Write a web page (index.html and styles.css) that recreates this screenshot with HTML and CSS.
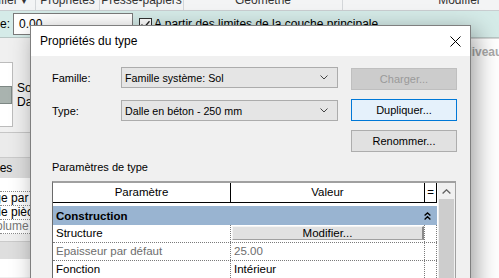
FILE: index.html
```html
<!DOCTYPE html>
<html lang="fr">
  <head>
    <meta charset="UTF-8" />
    <title>Propriétés du type</title>
    <link rel="stylesheet" href="styles.css">
  </head>
  <body>
    <div class="ribbon">
      <div class="ribbon-panel panel-select"><span>Modifier ▾</span></div>
      <div class="ribbon-panel panel-props"><span>Propriétés</span></div>
      <div class="ribbon-panel panel-clip"><span>Presse-papiers</span></div>
      <div class="ribbon-panel panel-geom"><span>Géométrie</span></div>
      <div class="ribbon-panel panel-modify"><span>Modifier</span></div>
    </div>

    <div class="options">
      <span class="opt-label">Décalage:</span>
      <div class="opt-input">0.00</div>
      <span class="opt-check">
        <svg width="11" height="11" viewBox="0 0 11 11"><path d="M1.5 5.5 L4.3 8.3 L9.5 2.3" fill="none" stroke="#222" stroke-width="1.3"/></svg>
      </span>
      <span class="opt-text">A partir des limites de la couche principale</span>
    </div>

    <div class="workspace">
      <div class="palette">
        <div class="type-selector">
          <div class="type-preview"><div class="type-swatch"></div></div>
          <div class="type-names">
            <div>Sol</div>
            <div>Dalle en béton - 250 mm</div>
          </div>
        </div>
        <div class="palette-filter"></div>
        <div class="palette-section"><span class="cut cut-contr">Contraintes</span></div>
        <div class="palette-row"></div>
        <div class="palette-row"><span class="cut cut-dec">Décalage par rapport au niveau</span></div>
        <div class="palette-row"><span class="cut cut-lim">Limite de pièce</span></div>
        <div class="palette-row muted"><span class="cut cut-vol">Lié au volume</span></div>
        <div class="palette-section dark"></div>
        <div class="palette-row link"><span class="cut cut-link">Modifier le type</span></div>
      </div>
      <div class="view">
        <div class="view-tab">Niveau 0</div>
      </div>
    </div>

    <div class="dialog">
      <div class="dialog-title">
        <span>Propriétés du type</span>
        <svg class="close" width="11" height="11" viewBox="0 0 11 11"><path d="M0.5 0.5 L10.5 10.5 M10.5 0.5 L0.5 10.5" stroke="#000" stroke-width="1"/></svg>
      </div>
      <div class="dialog-body">
        <div class="type-head">
          <div class="type-fields">
            <span class="field-label">Famille:</span>
            <div class="combo">
              <span>Famille système: Sol</span>
              <svg width="8" height="5" viewBox="0 0 8 5"><path d="M0.5 0.5 L4 4 L7.5 0.5" fill="none" stroke="#444" stroke-width="1"/></svg>
            </div>
            <span class="field-label">Type:</span>
            <div class="combo">
              <span>Dalle en béton - 250 mm</span>
              <svg width="8" height="5" viewBox="0 0 8 5"><path d="M0.5 0.5 L4 4 L7.5 0.5" fill="none" stroke="#444" stroke-width="1"/></svg>
            </div>
          </div>
          <div class="type-actions">
            <div class="btn btn-disabled">Charger...</div>
            <div class="btn btn-focus">Dupliquer...</div>
            <div class="btn">Renommer...</div>
          </div>
        </div>

        <div class="section-label">Paramètres de type</div>

        <div class="grid-frame">
          <div class="grid">
            <div class="grid-head">
              <div class="cell c-name">Paramètre</div>
              <div class="cell c-value">Valeur</div>
              <div class="cell c-eq">=</div>
            </div>
            <div class="grid-gap"></div>
            <div class="grid-group">
              <span>Construction</span>
              <svg width="7" height="8" viewBox="0 0 7 8"><path d="M0.6 3.6 L3.5 0.9 L6.4 3.6 M0.6 7.4 L3.5 4.7 L6.4 7.4" fill="none" stroke="#000" stroke-width="1.3"/></svg>
            </div>
            <div class="grid-row">
              <div class="cell c-name">Structure</div>
              <div class="cell c-value"><div class="cell-btn">Modifier...</div></div>
              <div class="cell c-eq"></div>
            </div>
            <div class="grid-row muted">
              <div class="cell c-name">Epaisseur par défaut</div>
              <div class="cell c-value">25.00</div>
              <div class="cell c-eq"></div>
            </div>
            <div class="grid-row">
              <div class="cell c-name">Fonction</div>
              <div class="cell c-value">Intérieur</div>
              <div class="cell c-eq"></div>
            </div>
          </div>
          <div class="scrollbar">
            <div class="scroll-up">
              <svg width="9" height="5" viewBox="0 0 9 5"><path d="M0.6 4.4 L4.5 0.8 L8.4 4.4" fill="none" stroke="#606060" stroke-width="1.3"/></svg>
            </div>
            <div class="scroll-thumb"></div>
          </div>
        </div>
      </div>
    </div>
  </body>
</html>
```

FILE: styles.css
```css
* {
  box-sizing: border-box;
}

html,
body {
  margin: 0;
}

body {
  width: 499px;
  height: 278px;
  overflow: hidden;
  position: relative;
  font-family: "Liberation Sans", Arial, sans-serif;
  font-size: 12px;
  color: #000;
  background-color: #fff;
}

/* ribbon, cut off at the top of the shot */
.ribbon {
  display: flex;
  height: 11px;
  background-color: #f3f4f5;
  border-bottom: 1px solid #c9cdd0;
  overflow: hidden;
  color: #333;
}

.ribbon-panel {
  flex: none;
  display: flex;
  justify-content: center;
  align-items: flex-start;
  border-right: 1px solid #d3d6d9;
  white-space: nowrap;
  overflow: hidden;
}

.ribbon-panel span {
  line-height: 12px;
  margin-top: -6px;
}

.panel-select {
  width: 36px;
  justify-content: flex-end;
  padding-right: 8px;
}

.panel-props {
  width: 64px;
}

.panel-clip {
  width: 84px;
}

.panel-geom {
  width: 159px;
}

.panel-modify {
  width: 234px;
}

/* options bar */
.options {
  display: flex;
  align-items: center;
  height: 27px;
  background-color: #d5ebe8;
  border-bottom: 1px solid #b7c5c3;
  white-space: nowrap;
  overflow: hidden;
}

.opt-label {
  margin-left: -44px;
  margin-right: 3px;
}

.opt-input {
  width: 120px;
  height: 22px;
  line-height: 20px;
  padding-left: 5px;
  background-color: #fff;
  border: 1px solid #7a7a7a;
}

.opt-check {
  display: flex;
  align-items: center;
  justify-content: center;
  width: 13px;
  height: 13px;
  margin-left: 6px;
  background-color: #fff;
  border: 1px solid #333;
}

.opt-text {
  margin-left: 2px;
}

/* workspace behind the dialog */
.workspace {
  display: flex;
  height: 240px;
}

.palette {
  flex: none;
  width: 300px;
  background-color: #f0f0f0;
  overflow: hidden;
  white-space: nowrap;
}

.type-selector {
  display: flex;
  align-items: center;
  margin-top: 24px;
  height: 65px;
}

.type-preview {
  display: flex;
  align-items: center;
  width: 50px;
  height: 65px;
  margin-left: -37px;
  background-color: #fff;
  border: 1px solid #bcbcbc;
}

.type-swatch {
  width: 48px;
  height: 18px;
  background-color: #a9b3af;
  border: 1px solid #7d8784;
}

.type-names {
  margin-left: 4px;
  line-height: 14px;
}

.palette-filter {
  height: 25px;
  margin-top: 5px;
  border-top: 1px solid #c6c6c6;
  background-color: #ebebeb;
}

.palette-section {
  height: 21px;
  line-height: 20px;
  background-color: #dedede;
  border-top: 1px solid #cacaca;
}

.palette-section.dark {
  height: 18px;
  margin-top: 7px;
}

.palette-row {
  height: 14px;
  line-height: 13px;
  background-color: #fff;
  border-bottom: 1px dotted #8a8a8a;
  overflow: hidden;
}

.palette-row.muted {
  color: #777;
}

.palette-row.link {
  height: 18px;
  line-height: 18px;
  color: #1f5fbf;
  border-bottom: none;
}

.cut {
  display: inline-block;
}

.cut-contr {
  margin-left: -49px;
}

.cut-dec {
  margin-left: -43px;
}

.cut-lim {
  margin-left: -41px;
}

.cut-vol {
  margin-left: -46px;
}

.cut-link {
  margin-left: -86px;
}

.view {
  flex: 1;
  min-width: 0;
  overflow: hidden;
  background-color: #fff;
  border-top: 1px solid #d6d6d6;
}

.view-tab {
  padding-left: 163px;
  padding-top: 6px;
  font-weight: bold;
  color: #a9a9a9;
  white-space: nowrap;
}

/* the type properties dialog */
.dialog {
  position: absolute;
  left: 30px;
  top: 25px;
  width: 441px;
  height: 330px;
  border: 1px solid #7f7f7f;
  background-color: #f0f0f0;
  box-shadow: 5px 6px 22px rgba(0, 0, 0, 0.38);
}

.dialog-title {
  display: flex;
  justify-content: space-between;
  align-items: center;
  height: 30px;
  padding: 0 9px 0 9px;
  background-color: #fff;
  font-size: 12px;
}

.close {
  margin-top: 1px;
}

.dialog-body {
  padding: 11px 13px 0 21px;
  font-size: 11px;
}

.type-head {
  display: flex;
  justify-content: space-between;
  align-items: flex-start;
}

.type-fields {
  display: grid;
  grid-template-columns: 69px 217px;
  row-gap: 12px;
  align-items: center;
}

.combo {
  display: flex;
  justify-content: space-between;
  align-items: center;
  height: 21px;
  padding: 0 9px 0 3px;
  background-color: #e5e5e5;
  border: 1px solid #acacac;
  font-size: 10.7px;
}

.type-actions {
  display: flex;
  flex-direction: column;
  gap: 9px;
  margin-top: 1px;
}

.btn {
  width: 106px;
  height: 22px;
  line-height: 20px;
  text-align: center;
  background-color: #e1e1e1;
  border: 1px solid #adadad;
}

.btn-disabled {
  background-color: #cccccc;
  border-color: #bfbfbf;
  color: #9a9a9a;
}

.btn-focus {
  background-color: #e5f1fb;
  border-color: #0078d7;
}

.section-label {
  margin-top: 8px;
  line-height: 14px;
}

/* parameter grid */
.grid-frame {
  display: flex;
  width: 404px;
  height: 120px;
  margin-top: 7px;
  background-color: #fff;
  border-top: 2px solid #a0a0a0;
  border-left: 1px solid #6a6a6a;
  border-right: 1px solid #a0a0a0;
  font-size: 11.5px;
}

.grid {
  width: 384px;
  margin-right: 1px;
}

.grid-head {
  display: flex;
  height: 20px;
  border-bottom: 1px solid #000;
}

.grid-head .cell {
  text-align: center;
  border-right: 1px solid #000;
  line-height: 19px;
}

.cell {
  flex: none;
  white-space: nowrap;
  overflow: hidden;
}

.c-name {
  width: 178px;
}

.c-value {
  width: 194px;
}

.c-eq {
  width: 12px;
}

.grid-gap {
  height: 3px;
}

.grid-group {
  display: flex;
  justify-content: space-between;
  align-items: center;
  height: 19px;
  padding: 0 6px 0 3px;
  background-color: #99b4d1;
  font-weight: bold;
}

.grid-row {
  display: flex;
  height: 18px;
  line-height: 17px;
  border-bottom: 1px dotted #7a7a7a;
}

.grid-row .cell {
  border-right: 1px dotted #7a7a7a;
}

.grid-row .c-name,
.grid-row .c-value {
  padding-left: 3px;
}

.grid-row.muted {
  color: #6d6d6d;
}

.grid-row .c-value:has(.cell-btn) {
  padding: 1px 0 2px 1px;
}

.cell-btn {
  height: 14px;
  line-height: 12px;
  text-align: center;
  background-color: #e1e1e1;
  border-top: 1px solid #f4f4f4;
  border-left: 1px solid #f4f4f4;
  border-right: 2px solid #8a8a8a;
  border-bottom: 1px solid #a0a0a0;
}

.scrollbar {
  width: 17px;
  background-color: #f0f0f0;
}

.scroll-up {
  display: flex;
  justify-content: center;
  align-items: center;
  height: 16px;
}

.scroll-thumb {
  width: 15px;
  height: 100px;
  margin-left: 1px;
  background-color: #cdcdcd;
}
```
